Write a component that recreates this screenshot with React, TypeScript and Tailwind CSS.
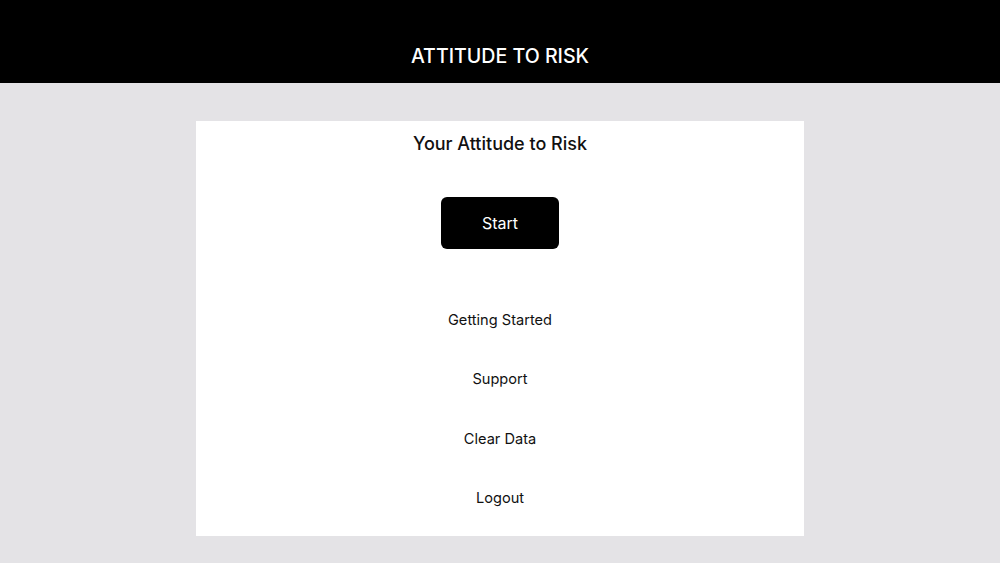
export default function App() {
  const links = ['Getting Started', 'Support', 'Clear Data', 'Logout'];

  return (
    <div className="min-h-[563px] bg-[#e4e3e6] font-['Inter',sans-serif] text-[#111]">
      <header className="flex h-[83px] items-end justify-center bg-black pb-[13px]">
        <h1 className="text-[19.6px] font-medium leading-[28px] text-white">ATTITUDE TO RISK</h1>
      </header>

      <main className="flex justify-center pt-[38px]">
        <div className="flex h-[415px] w-[608px] flex-col items-center bg-white pt-[9px]">
          <h2 className="text-[18px] font-medium leading-[28px]">Your Attitude to Risk</h2>

          <button className="mt-[39px] h-[52px] w-[118px] rounded-[6px] bg-black text-[16px] text-white">
            Start
          </button>

          <nav className="mt-[42px] flex flex-col items-center">
            {links.map((l) => (
              <a key={l} href="#" className="flex h-[59.5px] items-center text-[14.6px]">
                {l}
              </a>
            ))}
          </nav>
        </div>
      </main>
    </div>
  );
}
